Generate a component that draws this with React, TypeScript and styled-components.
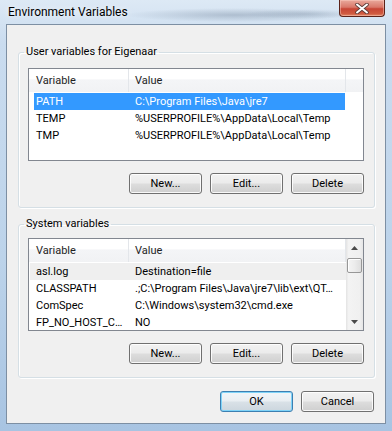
import React from "react";
import styled, { createGlobalStyle } from "styled-components";

const GlobalStyle = createGlobalStyle`
  html, body { margin: 0; padding: 0; }
  body {
    width: 392px; height: 431px; overflow: hidden;
    font-family: Roboto, "Noto Sans", sans-serif;
    font-size: 11px; color: #000;
  }
  * { box-sizing: border-box; }
`;

const Window = styled.div`
  width: 392px;
  height: 431px;
  display: flex;
  flex-direction: column;
  padding: 0 6px 7px 6px;
  background:
    radial-gradient(ellipse 110px 7px at 235px 15px, rgba(70, 90, 115, 0.28), transparent),
    radial-gradient(ellipse 60px 5px at 305px 14px, rgba(70, 90, 115, 0.2), transparent),
    linear-gradient(180deg, #dde9f5 0%, #cadcef 10%, #bcd3ea 60%, #a8c4e2 100%);
`;

const TitleBar = styled.div`
  height: 24px;
  flex: none;
  display: flex;
  align-items: flex-start;
  justify-content: space-between;
  padding: 0 1px 0 2px;
`;

const Title = styled.span`
  line-height: 24px;
  font-size: 12px;
  color: #000;
  text-shadow: 0 0 6px rgba(255, 255, 255, 0.9);
`;

const CloseButton = styled.div`
  width: 46px;
  height: 17px;
  border: 1px solid #5b2219;
  border-top: none;
  border-radius: 0 0 4px 4px;
  background: linear-gradient(180deg, #e9a99c 0%, #d9786a 45%, #c74535 55%, #cf5a40 85%, #e38a68 100%);
  box-shadow: inset 0 0 0 1px rgba(255, 210, 200, 0.45);
  display: flex;
  align-items: center;
  justify-content: center;
`;

const Client = styled.div`
  flex: 1;
  border: 1px solid #7d8fa3;
  background: #f0f0f0;
  display: flex;
  flex-direction: column;
  padding: 0 10px 0 11px;
`;

const Group = styled.fieldset<{ $top: number; $pad: number }>`
  margin: ${(p) => p.$top}px 0 0 0;
  padding: ${(p) => p.$pad}px 10px 13px 9px;
  border: 1px solid #d5dfe5;
  border-radius: 3px;
  min-width: 0;
  box-shadow: inset 1px 1px 0 #fff, 1px 1px 0 #fff;
`;

const Legend = styled.legend`
  margin-left: -4px;
  padding: 0 2px;
  line-height: 16px;
  font-size: 11px;
  color: #000;
`;

const ListView = styled.div`
  height: 93px;
  border: 1px solid #828790;
  background: #fff;
  display: flex;
  overflow: hidden;
`;

const ListBody = styled.div`
  flex: 1;
  display: flex;
  flex-direction: column;
  min-width: 0;
`;

const Header = styled.div<{ $filler: boolean }>`
  height: 23px;
  flex: none;
  display: grid;
  grid-template-columns: ${(p) => (p.$filler ? "100px 217px 1fr" : "100px 217px")};
  background: linear-gradient(180deg, #ffffff 0%, #ffffff 45%, #f4f5f7 46%, #f1f2f4 100%);
`;

const HeaderCell = styled.div<{ $last?: boolean }>`
  display: flex;
  align-items: center;
  padding-left: 6px;
  border-right: ${(p) => (p.$last ? "none" : "1px solid #e3e6ea")};
  color: #1e1e1e;
  &:first-child { padding-left: 7px; }
`;

const Rows = styled.div`
  padding-top: 1px;
  display: flex;
  flex-direction: column;
`;

const Row = styled.div<{ $state?: "selected" | "hover" }>`
  height: 17px;
  flex: none;
  width: 317px;
  display: grid;
  grid-template-columns: 100px 217px;
  align-items: center;
  color: ${(p) => (p.$state === "selected" ? "#fff" : "#000")};
  background: ${(p) =>
    p.$state === "selected"
      ? "linear-gradient(90deg, transparent 5px, #3399ff 5px, #3399ff 316px, transparent 316px)"
      : p.$state === "hover"
      ? "linear-gradient(90deg, transparent 1px, #efefef 1px, #efefef 317px)"
      : "transparent"};
`;

const Cell = styled.div`
  padding-left: 6px;
  white-space: nowrap;
  overflow: hidden;
  &:first-child { padding-left: 7px; }
`;

const ScrollBar = styled.div`
  width: 17px;
  flex: none;
  display: flex;
  flex-direction: column;
  background: linear-gradient(90deg, #e3e3e3 0%, #f3f3f3 15%, #f0f0f0 80%, #e6e6e6 100%);
`;

const ArrowButton = styled.div`
  height: 17px;
  flex: none;
  display: flex;
  align-items: center;
  justify-content: center;
`;

const Track = styled.div`
  flex: 1;
  padding: 2px 1px 0 1px;
`;

const Thumb = styled.div`
  height: 15px;
  border: 1px solid #979797;
  border-radius: 2px;
  background: linear-gradient(90deg, #f4f4f4 0%, #ececec 50%, #dedede 100%);
  box-shadow: inset 1px 1px 0 #fff;
`;

const ButtonRow = styled.div<{ $top: number; $right?: number }>`
  display: flex;
  justify-content: flex-end;
  gap: 8px;
  margin-top: ${(p) => p.$top}px;
  padding-right: ${(p) => p.$right ?? 0}px;
`;

const Button = styled.button<{ $default?: boolean }>`
  width: 73px;
  height: 21px;
  padding: 0;
  font-family: inherit;
  font-size: 11px;
  color: #000;
  border: 1px solid ${(p) => (p.$default ? "#3c7fb1" : "#707070")};
  border-radius: 3px;
  background: ${(p) =>
    p.$default
      ? "linear-gradient(180deg, #f1f5f8 0%, #e9eef2 48%, #d9e1e7 52%, #ccd6de 100%)"
      : "linear-gradient(180deg, #f2f2f2 0%, #ebebeb 48%, #dddddd 52%, #cfcfcf 100%)"};
  box-shadow: inset 0 0 0 1px ${(p) => (p.$default ? "#7fd3f8" : "rgba(255,255,255,0.85)")};
`;

const Up = () => (
  <svg width="7" height="4" viewBox="0 0 7 4">
    <polygon points="0,4 3.5,0 7,4" fill="#4a4a4a" />
  </svg>
);
const Down = () => (
  <svg width="7" height="4" viewBox="0 0 7 4">
    <polygon points="0,0 3.5,4 7,0" fill="#4a4a4a" />
  </svg>
);

const CloseX = () => (
  <svg width="14" height="11" viewBox="0 0 14 11">
    <path
      d="M2 1.5 L12 9.5 M12 1.5 L2 9.5"
      stroke="#5a3a36"
      strokeWidth="3.6"
      strokeLinecap="round"
    />
    <path
      d="M2 1.5 L12 9.5 M12 1.5 L2 9.5"
      stroke="#ffffff"
      strokeWidth="2"
      strokeLinecap="round"
    />
  </svg>
);

type Item = { name: string; value: string; state?: "selected" | "hover" };

const userVars: Item[] = [
  { name: "PATH", value: "C:\\Program Files\\Java\\jre7", state: "selected" },
  { name: "TEMP", value: "%USERPROFILE%\\AppData\\Local\\Temp" },
  { name: "TMP", value: "%USERPROFILE%\\AppData\\Local\\Temp" },
];

const sysVars: Item[] = [
  { name: "asl.log", value: "Destination=file", state: "hover" },
  { name: "CLASSPATH", value: ".;C:\\Program Files\\Java\\jre7\\lib\\ext\\QT\u2026" },
  { name: "ComSpec", value: "C:\\Windows\\system32\\cmd.exe" },
  { name: "FP_NO_HOST_C\u2026", value: "NO" },
];

const VarList = ({ items, scroll }: { items: Item[]; scroll: boolean }) => (
  <ListView>
    <ListBody>
      <Header $filler={!scroll}>
        <HeaderCell>Variable</HeaderCell>
        <HeaderCell>Value</HeaderCell>
        {!scroll && <HeaderCell $last />}
      </Header>
      <Rows>
        {items.map((it) => (
          <Row key={it.name} $state={it.state}>
            <Cell>{it.name}</Cell>
            <Cell>{it.value}</Cell>
          </Row>
        ))}
      </Rows>
    </ListBody>
    {scroll && (
      <ScrollBar>
        <ArrowButton>
          <Up />
        </ArrowButton>
        <Track>
          <Thumb />
        </Track>
        <ArrowButton>
          <Down />
        </ArrowButton>
      </ScrollBar>
    )}
  </ListView>
);

export default function App() {
  return (
    <>
      <GlobalStyle />
      <Window>
        <TitleBar>
          <Title>Environment Variables</Title>
          <CloseButton>
            <CloseX />
          </CloseButton>
        </TitleBar>
        <Client>
          <Group $top={19} $pad={8}>
            <Legend>User variables for Eigenaar</Legend>
            <VarList items={userVars} scroll={false} />
            <ButtonRow $top={12}>
              <Button>New...</Button>
              <Button>Edit...</Button>
              <Button>Delete</Button>
            </ButtonRow>
          </Group>
          <Group $top={8} $pad={6}>
            <Legend>System variables</Legend>
            <VarList items={sysVars} scroll />
            <ButtonRow $top={12}>
              <Button>New...</Button>
              <Button>Edit...</Button>
              <Button>Delete</Button>
            </ButtonRow>
          </Group>
          <ButtonRow $top={13} $right={1}>
            <Button $default>OK</Button>
            <Button>Cancel</Button>
          </ButtonRow>
        </Client>
      </Window>
    </>
  );
}
